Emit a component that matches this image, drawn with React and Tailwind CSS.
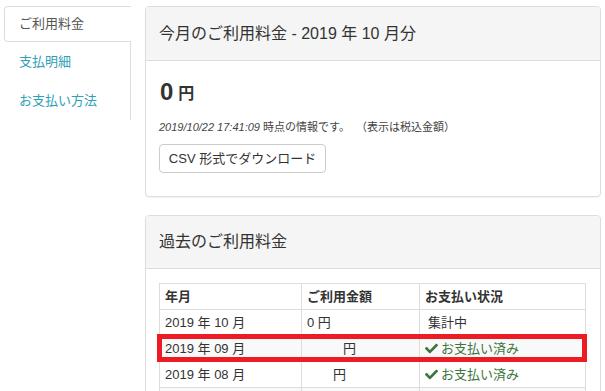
import React from "react";
import { FaCheck } from "react-icons/fa";

const rows = [
  { ym: "2019 年 10 月", amount: "0 円", amtPad: "pl-[5px]", status: "集計中" },
  { ym: "2019 年 09 月", amount: "円", amtPad: "pl-[41px]", status: "paid", striped: true },
  { ym: "2019 年 08 月", amount: "円", amtPad: "pl-[31px]", status: "paid" },
  { ym: "", amount: "", amtPad: "pl-[31px]", status: "", striped: true },
];

function Panel({ title, headerH, children, className = "" }) {
  return (
    <div className={`border border-[#dddddd] rounded-[4px] bg-white shadow-[0_1px_1px_rgba(0,0,0,0.05)] ${className}`}>
      <div className={`${headerH} bg-[#f5f5f5] border-b border-[#dddddd] rounded-t-[3px] px-[13px] flex items-center text-[16px] text-[#333]`}>
        {title}
      </div>
      {children}
    </div>
  );
}

export default function App() {
  return (
    <div className="w-[605px] h-[391px] overflow-hidden bg-white font-['Liberation_Sans','Noto_Sans_CJK_JP',sans-serif] flex items-start pl-[4px] pt-[6px]">
      {/* left nav */}
      <div className="w-[127px] shrink-0 text-[13px]">
        <div className="h-[36px] border-t border-l border-b border-[#dddddd] rounded-l-[4px] bg-white flex items-center pl-[14px] text-[#555]">
          ご利用料金
        </div>
        <div className="border-r border-[#dddddd]">
          <div className="h-[39px] flex items-center pl-[15px] text-[#2fa0b5]">支払明細</div>
          <div className="h-[39px] flex items-center pl-[15px] text-[#2fa0b5]">お支払い方法</div>
        </div>
      </div>

      {/* main */}
      <div className="ml-[14px] w-[456px] shrink-0">
        <Panel title="今月のご利用料金 - 2019 年 10 月分" headerH="h-[54px]" className="mb-[18px]">
          <div className="px-[13px] pt-[14px] pb-[23px]">
            <div className="h-[34px] flex items-center text-[#333] font-bold">
              <span className="text-[24px] leading-none ml-[1px]">0</span>
              <span className="text-[16px] leading-none ml-[5px] mt-[4px]">円</span>
            </div>
            <div className="h-[16px] mt-[10px] flex items-center text-[11px] text-[#444] whitespace-nowrap">
              <span className="italic">2019/10/22 17:41:09</span>
              <span>&nbsp;時点の情報です。&nbsp;&nbsp;（表示は税込金額）</span>
            </div>
            <button className="mt-[9px] h-[29px] w-[167px] border border-[#cccccc] rounded-[4px] bg-white text-[13px] text-[#333] flex items-center justify-center whitespace-nowrap">
              CSV 形式でダウンロード
            </button>
          </div>
        </Panel>

        <Panel title="過去のご利用料金" headerH="h-[53px]">
          <div className="px-[13px] pt-[14px] pb-[20px]">
            <div className="relative w-[427px] border-l border-t border-[#dddddd] text-[13px] text-[#333]">
              <div className="grid grid-cols-[142px_118px_166px] h-[26px] font-bold">
                <div className="border-r border-b border-[#dddddd] px-[5px] flex items-center">年月</div>
                <div className="border-r border-b border-[#dddddd] px-[5px] flex items-center">ご利用金額</div>
                <div className="border-r border-b border-[#dddddd] px-[5px] flex items-center">お支払い状況</div>
              </div>
              {rows.map((r, i) => (
                <div
                  key={i}
                  className={`grid grid-cols-[142px_118px_166px] h-[26px] ${r.striped ? "bg-[#f9f9f9]" : "bg-white"}`}
                >
                  <div className="border-r border-b border-[#dddddd] px-[5px] flex items-center whitespace-nowrap">{r.ym}</div>
                  <div className={`border-r border-b border-[#dddddd] ${r.amtPad} flex items-center whitespace-nowrap`}>{r.amount}</div>
                  <div className="border-r border-b border-[#dddddd] px-[5px] flex items-center whitespace-nowrap">
                    {r.status === "paid" ? (
                      <span className="flex items-center text-[#3c763d]">
                        <FaCheck className="w-[13px] h-[13px] mr-[3px]" />
                        お支払い済み
                      </span>
                    ) : (
                      <span className="pl-[3px]">{r.status}</span>
                    )}
                  </div>
                </div>
              ))}
              {/* red highlight */}
              <div className="absolute left-[-3px] top-[50px] w-[430px] h-[28px] border-[5px] border-[#ed1c24]" />
            </div>
          </div>
        </Panel>
      </div>
    </div>
  );
}
